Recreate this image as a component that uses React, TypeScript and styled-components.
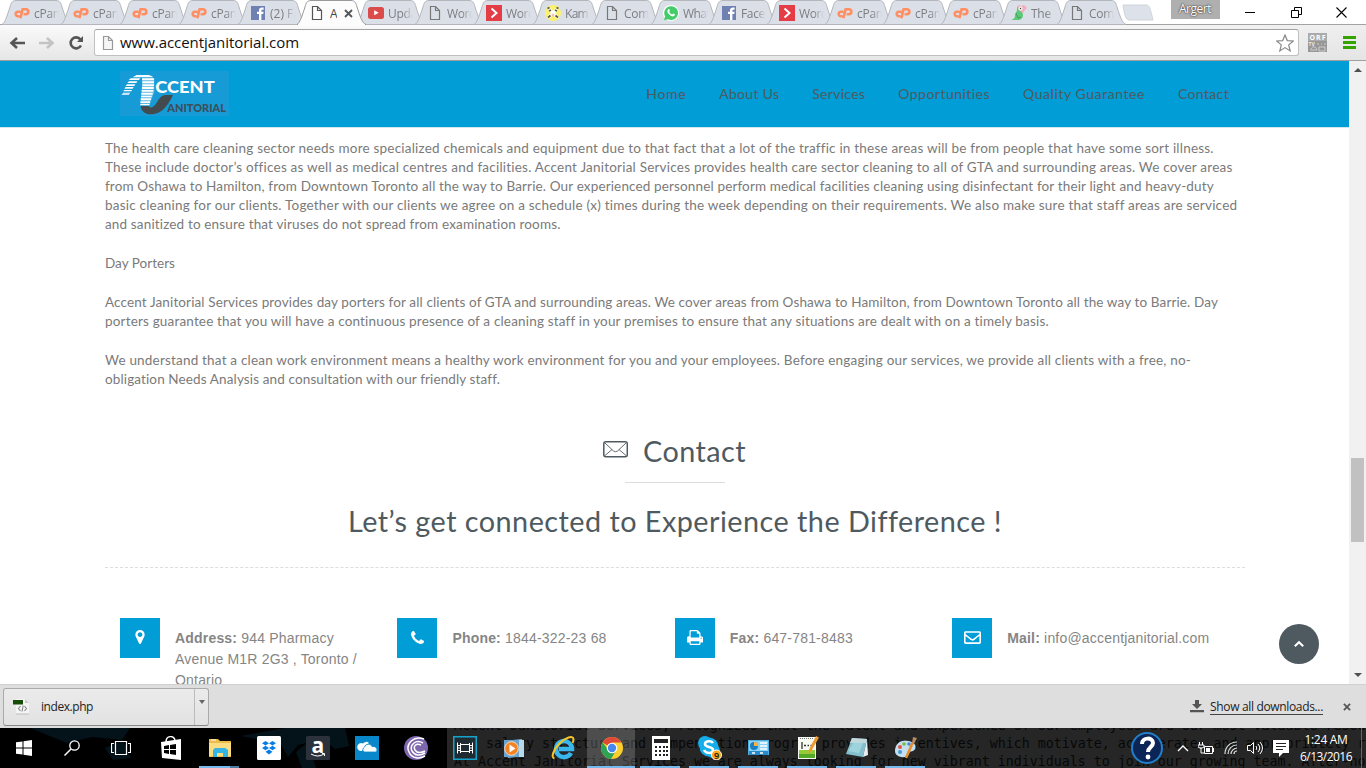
import React, { useLayoutEffect, useRef, useState } from 'react';
import styled, { createGlobalStyle, css } from 'styled-components';
import { FaRegEnvelope } from 'react-icons/fa';

const blue = '#009dd6';
const slate = '#4f5a60';
const uiFont = `"Open Sans", "Noto Sans", sans-serif`;
const siteFont = `Lato, "Open Sans", sans-serif`;

const GlobalStyle = createGlobalStyle`
  * { box-sizing: border-box; }
  body { margin: 0; background: #fff; overflow: hidden; }
  svg { display: block; flex: none; }
`;

/* Text line whose tracking adapts so that it fills the given measure. */
const Line = styled.span`
  display: block;
  width: max-content;
  white-space: pre;
`;

function Fit({ w, children }: { w: number; children: string }) {
  const ref = useRef<HTMLSpanElement>(null);
  const [spacing, setSpacing] = useState(0);
  useLayoutEffect(() => {
    if (ref.current) {
      const natural = ref.current.getBoundingClientRect().width;
      setSpacing((w - natural) / children.length);
    }
  }, [w, children]);
  return <Line ref={ref} style={{ letterSpacing: spacing }}>{children}</Line>;
}

const Screen = styled.div`
  width: 1366px;
  height: 768px;
  display: flex;
  flex-direction: column;
  overflow: hidden;
  background: #fff;
  font-family: ${uiFont};
`;

/* ---------- Browser chrome ---------- */
const TabStrip = styled.div`
  height: 24px;
  display: flex;
  flex: none;
  padding-left: 2px;
  background: #fff;
`;
const Tab = styled.div<{ $active?: boolean; $narrow?: boolean }>`
  position: relative;
  width: ${p => (p.$narrow ? 58 : 59)}px;
  height: 25px;
  flex: none;
  display: flex;
  align-items: flex-start;
  padding: 5px 0 0 12px;
  z-index: ${p => (p.$active ? 2 : 'auto')};
`;
const TabShape = styled.svg`
  position: absolute;
  left: 0;
  top: 0;
  overflow: visible;
`;
const Favicon = styled.div`
  position: relative;
  width: 16px;
  height: 16px;
`;
const TabLabel = styled.div<{ $short?: boolean }>`
  position: relative;
  width: ${p => (p.$short ? 7 : 25)}px;
  margin-left: ${p => (p.$short ? 5 : 4)}px;
  overflow: hidden;
  font-size: 12px;
  line-height: 17px;
  color: ${p => (p.$short ? '#444' : '#7b7d80')};
  ${p => !p.$short && css`mask-image: linear-gradient(90deg, #000 60%, transparent);`}
`;
const TabClose = styled.div`
  position: relative;
  margin: 4px 0 0 7px;
`;
const NewTab = styled.svg`
  margin: 4px 0 0 6px;
`;
const User = styled.div`
  width: 49px;
  height: 19px;
  margin-left: 16px;
  padding-left: 8px;
  background: #afafaf;
  color: #fff;
  font-size: 12px;
  line-height: 17px;
  text-shadow: 0 0 2px #333, 0 0 1px #333;
`;
const WindowButtons = styled.div`
  display: flex;
  gap: 34.5px;
  margin: 7px 0 0 25px;
`;

const Toolbar = styled.div`
  height: 37px;
  flex: none;
  display: flex;
  align-items: center;
  border-top: 1px solid #a3a3a3;
  border-bottom: 1px solid #a0a0a0;
  background: linear-gradient(90deg, transparent 70%, #e4e4e488), linear-gradient(#fafafa, #e6e6e6);
  padding-left: 9px;
`;
const Address = styled.div`
  width: 1205px;
  height: 27px;
  margin-left: 10px;
  padding: 0 4px 0 5px;
  display: flex;
  align-items: center;
  border: 1px solid #c0c0c0;
  border-top-color: #a2a2a2;
  border-radius: 3px;
  background: #fff;
  font-size: 15px;
  color: #111;
`;
const Url = styled.div`
  flex: 1;
  margin: -2px 0 0 4px;
  line-height: 22px;
`;

/* ---------- Web page ---------- */
const Viewport = styled.div`
  position: relative;
  height: 623px;
  flex: none;
  display: flex;
  overflow: hidden;
`;
const Site = styled.div`
  width: 1349px;
  height: 623px;
  overflow: hidden;
  font-family: ${siteFont};
`;
const Header = styled.header`
  height: 67px;
  display: flex;
  align-items: flex-start;
  justify-content: space-between;
  padding: 10px 120px 0 120px;
  background: ${blue};
  border-bottom: 1px solid #cfe6ef;
`;
const Nav = styled.nav`
  display: flex;
  gap: 33px;
  padding-top: 13px;
  font-size: 14px;
  line-height: 20px;
  color: ${slate};
`;
const Content = styled.main`
  width: 1140px;
  margin-left: 105px;
  padding-top: 11px;
`;
const Paragraph = styled.div`
  margin-bottom: 20px;
  font-size: 13.5px;
  line-height: 19px;
  color: #7a7a7a;
`;
const SectionTitle = styled.div`
  display: flex;
  align-items: center;
  margin: 41px 0 0 498px;
  gap: 15px;
  height: 42px;
  font-size: 28.8px;
  line-height: 42px;
  color: ${slate};
`;
const Rule = styled.div`
  width: 100px;
  height: 1px;
  margin: 10px 0 0 520px;
  background: #ddd;
`;
const Tagline = styled.div`
  margin: 17px 0 0 243px;
  font-size: 28.8px;
  line-height: 42px;
  color: ${slate};
`;
const Divider = styled.div`
  margin-top: 25px;
  border-top: 1px dashed #ddd;
`;
const Contacts = styled.div`
  display: grid;
  grid-template-columns: repeat(4, 277.4px);
  padding-top: 50px;
`;
const ContactItem = styled.div`
  display: flex;
  gap: 15px;
  padding: 0 15px;
`;
const IconTile = styled.div`
  width: 40px;
  height: 40px;
  flex: none;
  display: grid;
  place-items: center;
  padding-bottom: 2px;
  background: ${blue};
  color: #fff;
`;
const ContactText = styled.p<{ $nowrap?: boolean }>`
  margin: 0;
  padding-top: 10px;
  font: 14px/21px "Liberation Sans", sans-serif;
  letter-spacing: 0.19px;
  color: #858585;
  white-space: ${p => (p.$nowrap ? 'nowrap' : 'normal')};
`;
const ToTop = styled.div`
  position: absolute;
  left: 1279px;
  top: 563px;
  width: 40px;
  height: 40px;
  border-radius: 50%;
  background: ${slate};
  display: grid;
  place-items: center;
`;
const ScrollTrack = styled.div`
  width: 17px;
  display: flex;
  flex-direction: column;
  align-items: center;
  padding: 7px 0;
  background: #f1f1f1;
`;
const ScrollThumb = styled.div`
  width: 13px;
  height: 84px;
  margin: 386px 0 auto;
  background: #c1c1c1;
`;

/* ---------- Download shelf ---------- */
const Shelf = styled.div`
  height: 44px;
  flex: none;
  display: flex;
  align-items: center;
  padding-left: 3px;
  border-top: 1px solid #d0d0d0;
  background: #dedede;
  font-size: 12px;
  color: #222;
`;
const Download = styled.div`
  width: 206px;
  height: 38px;
  display: flex;
  align-items: center;
  border: 1px solid #aaa;
  border-bottom-color: #888;
  border-radius: 3px;
  background: linear-gradient(#ebebeb, #e2e2e2);
  padding-left: 9px;
`;
const FileName = styled.div`
  flex: 1;
  margin-left: 12px;
`;
const Arrow = styled.div`
  width: 14px;
  height: 36px;
  padding: 11px 0 0 4px;
  border-left: 1px solid #bbb;
`;
const ShowAll = styled.div`
  display: flex;
  align-items: center;
  gap: 6px;
  margin-left: 981px;
`;
const Underlined = styled.div`
  margin-top: 1px;
  border-bottom: 1px solid #444;
  line-height: 14px;
`;
const ShelfClose = styled.div`
  margin-left: 20px;
`;

/* ---------- Taskbar ---------- */
const Taskbar = styled.div`
  position: relative;
  height: 40px;
  flex: none;
  display: flex;
  overflow: hidden;
  background: linear-gradient(90deg, #000 0 447px, #262626 447px);
`;
const Ghost = styled.div`
  position: absolute;
  left: 454px;
  top: -11px;
  font: 13.29px/18px "DejaVu Sans Mono", monospace;
  color: #080808;
  white-space: pre;
`;
const Shade = styled.svg`
  position: absolute;
  left: 0;
  top: 0;
`;
const Slot = styled.div<{ $w?: number; $state?: 'open' | 'active' | 'group' }>`
  position: relative;
  width: ${p => p.$w ?? 49}px;
  height: 40px;
  flex: none;
  display: grid;
  place-items: center;
  ${p => p.$state === 'active' && css`
    background: linear-gradient(#ffffff2e, #ffffff2e) 0 0 / 48px 40px no-repeat;
  `}
  ${p => p.$state && css`
    &::after {
      content: '';
      position: absolute;
      bottom: 0;
      left: ${p.$state === 'active' ? 0 : 4}px;
      width: ${p.$state === 'active' ? 48 : 40}px;
      height: 2px;
      background: ${p.$state === 'group' ? 'linear-gradient(90deg, #76b9ed 31px, #4f7ba0 31px)' : '#76b9ed'};
    }
  `}
`;
const Tray = styled.div`
  position: relative;
  display: flex;
  align-items: center;
  margin-left: 201px;
`;
const TrayIcons = styled.div`
  display: flex;
  align-items: center;
  gap: 9px;
  margin-left: 14px;
`;
const Clock = styled.div`
  width: 54px;
  margin-left: 10px;
  display: flex;
  flex-direction: column;
  align-items: center;
  font-size: 12px;
  line-height: 17px;
  color: #fff;
`;
const PeekLine = styled.div`
  width: 1px;
  height: 40px;
  margin-left: 8px;
  background: #666;
`;

/* ---------- Drawings ---------- */
const PageIcon = ({ c = '#777', f = '#fff' }: { c?: string; f?: string }) => (
  <svg width="16" height="16" viewBox="0 0 16 16">
    <path d="M3.500 1.500h5l4 4v9h-9zM8.500 1.500v4h4" fill={f} stroke={c} strokeWidth="1.200" />
  </svg>
);
const CpIcon = () => (
  <svg width="16" height="16" viewBox="0 0 16 16" fill="none" stroke="#ff8f62" strokeWidth="2.600">
    <path d="M6.600 6.800H3.900a2.200 2.200 0 0 0 0 4.400h1.500M6.400 13.200L8.600 4.300h3.300a2.400 2.400 0 0 1 0 4.900H9.500" />
  </svg>
);
const FbIcon = () => (
  <svg width="16" height="16" viewBox="0 0 16 16">
    <rect x="1" y="1" width="14" height="14" fill="#6f80b3" />
    <path d="M9 15V9H7V6.800h2V5.500C9 3.400 10.200 2.600 12 2.600h1.600v2.200h-1.200c-.8 0-1 .4-1 1v1h2.200L13.200 9h-1.800v6z" fill="#fff" />
  </svg>
);
const YtIcon = () => (
  <svg width="16" height="16" viewBox="0 0 16 16">
    <rect x="0" y="2" width="16" height="12" rx="2.500" fill="#dc4b4b" />
    <path d="M6.200 5.300v5l4.500-2.500z" fill="#fff" />
  </svg>
);
const RedIcon = () => (
  <svg width="16" height="16" viewBox="0 0 16 16">
    <path d="M0 0h16v16H0z" fill="#e43d45" />
    <path d="M5.500 3.500l5 4.500-5 4.500" fill="none" stroke="#fff" strokeWidth="2" />
  </svg>
);
const KamIcon = () => (
  <svg width="16" height="16" viewBox="0 0 16 16">
    <circle cx="8" cy="8" r="8" fill="#fbf16c" />
    <path d="M3 13l9-9M13 13L4 4" stroke="#fff" strokeWidth="3" />
    <path d="M2.500 3.500l2-1M4 6l2-1M11.500 2.500l2 1M10 5l2 1M3 12.500l2.500-2M10.500 10.500l2.500 2" stroke="#5a5a48" strokeWidth="1.800" />
    <circle cx="8" cy="10" r="1.500" fill="#f4c6ae" />
  </svg>
);
const WaIcon = () => (
  <svg width="16" height="16" viewBox="0 0 16 16">
    <circle cx="8" cy="8" r="8" fill="#fff" />
    <path d="M1 15.200l1.100-3.800A6.900 6.900 0 1 1 5 14.200z" fill="#43cc69" />
    <path d="M5.200 4.200c.8-.6 1.200 0 1.700 1.300 0 .5-.8.900-.6 1.400.6 1.200 1.500 2 2.700 2.500.5.200.9-.9 1.400-.8 1.700.7 1.900 1 1.200 2-1.200 1.400-3.200.8-5-.8-2-1.800-3-4-1.400-5.600z" fill="#fff" />
  </svg>
);
const ParrotIcon = () => (
  <svg width="16" height="16" viewBox="0 0 16 16">
    <path d="M6 2c2-2 6-1 6 2l-1 3c2 3 1 7-3 8H0c3-1 4-2 4-5 0-2 2-3 2-5z" fill="#5cc878" />
    <path d="M6 2l2-2 2 1 3-1 3 3-3 3-1 2-3-2-1-3z" fill="#f6a9c0" />
    <circle cx="9.500" cy="3.500" r="2.300" fill="#e8e8dc" />
    <path d="M9 3h1v1H9z" fill="#333" />
    <path d="M5 8l2 5 3-1" stroke="#3aa85a" fill="none" />
  </svg>
);
const CloseX = ({ size = 9, w = 1.8 }: { size?: number; w?: number }) => (
  <svg width={size} height={size} viewBox="0 0 9 9">
    <path d="M1 1l7 7M8 1L1 8" stroke="#555" strokeWidth={w} />
  </svg>
);

const tabs: { icon: React.ReactNode; label: string; w: number; active?: boolean }[] = [
  { icon: <CpIcon />, label: 'cPanel', w: 35 },
  { icon: <CpIcon />, label: 'cPanel', w: 35 },
  { icon: <CpIcon />, label: 'cPanel', w: 35 },
  { icon: <CpIcon />, label: 'cPanel', w: 35 },
  { icon: <FbIcon />, label: '(2) Fa', w: 30 },
  { icon: <PageIcon c="#555" />, label: 'A', w: 7, active: true },
  { icon: <YtIcon />, label: 'Upda', w: 29 },
  { icon: <PageIcon f="none" />, label: 'Word', w: 29 },
  { icon: <RedIcon />, label: 'Word', w: 29 },
  { icon: <KamIcon />, label: 'Kam', w: 23 },
  { icon: <PageIcon f="none" />, label: 'Com', w: 25 },
  { icon: <WaIcon />, label: 'What', w: 27 },
  { icon: <FbIcon />, label: 'Face', w: 24 },
  { icon: <RedIcon />, label: 'Word', w: 29 },
  { icon: <CpIcon />, label: 'cPanel', w: 35 },
  { icon: <CpIcon />, label: 'cPanel', w: 35 },
  { icon: <CpIcon />, label: 'cPanel', w: 35 },
  { icon: <ParrotIcon />, label: 'The', w: 20 },
  { icon: <PageIcon f="none" />, label: 'Com', w: 25 },
];

const Logo = () => (
  <svg width="109" height="45" viewBox="60 33 327 135">
    <path d="M60 33h327v135H60z" fill="#179bd7" />
    <g fill="#fff">
      <path d="M110 45h36q10 2 14 7h-62zM92 55h29l-4 5H86zM126 55h36v6h-36zM87 64h25l-3 5H82zM127 64h35v6h-35zM81 73h25l-3 5H77zM127 73h35v6h-35zM77 81h24l-3 5H73zM126 81h35v6h-35zM73 90h23l-2 4H70zM125 90h35v5h-35zM69 98h22l-2 3H67zM124 98h34v6h-34zM66 103h21v2H65zM123 107h32v5h-32zM122 115h31v6h-31zM121 124h29v5h-29zM121 132h27v4h-27z" />
      <path d="M127 55h36v42l-8 20-6 19h-27z" opacity=".3" />
      <text x="166" y="98" fontFamily="Lato, sans-serif" fontWeight="900" fontSize="49" textLength="178" lengthAdjust="spacingAndGlyphs">CCENT</text>
    </g>
    <path d="M122 138h25c4 8 12 5 20-5 9-12 13-28 30-28h22c-12 25-30 58-67 58-17 0-29-10-30-25z" fill="#444b4e" />
    <text x="202" y="156" fontFamily="Lato, sans-serif" fontWeight="900" fontSize="31" fill="#3c4f5a" textLength="176" lengthAdjust="spacingAndGlyphs">ANITORIAL</text>
  </svg>
);

const svg = (children: React.ReactNode, w = 24, h = 24) => (
  <svg width={w} height={h} viewBox={`0 0 ${w} ${h}`}>{children}</svg>
);

const apps: { icon: React.ReactNode; state?: 'open' | 'active' | 'group' }[] = [
  { icon: svg(<>
    <path d="M2 6l20-3v21L3 22z" fill="#fff" /><path d="M7 6c0-7 9-7 9-1" fill="none" stroke="#fff" strokeWidth="1.500" />
    <path d="M5 10l5-1v4H5zM11 9l6-1v5h-6zM5 14h5v4l-5-1zM11 14h6v5l-6-1z" fill="#000" /></>) },
  { state: 'group', icon: svg(<>
    <path d="M1 3h9l2 2h11v16H1z" fill="#eebc4b" /><path d="M1 7h22v13H1z" fill="#fbdd81" /><path d="M3 4h5" stroke="#fff" />
    <path d="M5 21v-7l2-2h10l3 2v7h-5v-4h-6v4z" fill="#35b4e6" /></>) },
  { icon: svg(<>
    <rect width="24" height="24" rx="1.500" fill="#fff" />
    <path d="M8.500 5L12 7.300 8.500 9.600 5 7.300zM15.500 5L19 7.300l-3.500 2.300L12 7.300zM8.500 9.800L12 12l-3.500 2.300L5 12zM15.500 9.800L19 12l-3.500 2.300L12 12zM12 13.400l3.500 2.300L12 18.500l-3.500-2.800z" fill="#087ee5" /></>) },
  { icon: svg(<>
    <rect width="24" height="24" rx="1.500" fill="#2c323c" />
    <text x="5.500" y="17" fontFamily="Open Sans" fontWeight="700" fontSize="21" fill="#fff">a</text>
    <path d="M5 18q7 4 13 0M16 17.500h2.500V20" stroke="#fff" fill="none" /></>) },
  { icon: svg(<>
    <path d="M0 0h24v24H0z" fill="#0888ca" />
    <path d="M7 15a4 4 0 1 1 1-7.500 4 4 0 0 1 6-.5l-5 5z" fill="#fff" />
    <path d="M9 16a3 3 0 0 1 .5-5 4 4 0 0 1 7.500-.5c3-.5 5 1 5 3.500 0 1.500-1 2-2 2z" fill="#fff" stroke="#0888ca" strokeWidth=".8" /></>) },
  { icon: svg(<>
    <circle cx="12" cy="12" r="12" fill="#7d67ad" />
    <path d="M20 3C10-1 1 8 5 16c3 7 11 7 16 4M19 7C12 3 5 9 8 15c3 5 8 5 13 2M17 9c-5-2-8 1-6 5 2 3 6 3 10 1" fill="none" stroke="#fff" strokeWidth="1.500" /></>) },
  { icon: svg(<>
    <path d="M.75.75h22.500v22.500H.75z" fill="#202b31" stroke="#15a4cc" strokeWidth="1.500" />
    <path d="M4.500 6.500v11M19.500 6.500v11M7.500 7v10M16.500 7v10M7 8.500h10M7 15.500h10M4 9.500h3M4 12h3M4 14.500h3M17 9.500h3M17 12h3M17 14.500h3" stroke="#fff" fill="none" strokeWidth="1" /></>) },
  { icon: svg(<>
    <path d="M2 5l18-2 2 17-16 2z" fill="#78b2d7" /><path d="M16 4h6v17h-6z" fill="#b8d9ea" /><path d="M2 4h15v17H2z" fill="#6ba4cf" />
    <circle cx="9.500" cy="12.500" r="6.800" fill="#f58322" stroke="#f7ddc6" /><path d="M7.500 8.500v8l6-4z" fill="#fff" /></>) },
  { icon: svg(<>
    <path d="M20 17a8 8 0 1 1 1-4H8" fill="none" stroke="#39b7ed" strokeWidth="4.500" />
    <path d="M3.500 22.500c-4-1-1-9 5-15S22-1 22.500 3c0 1 0 2-1 4" fill="none" stroke="#f6c52a" strokeWidth="2" /></>) },
  { state: 'active', icon: svg(<>
    <circle cx="12" cy="12" r="11" fill="#f9ce2d" />
    <path d="M12 12L2.500 6.500A11 11 0 0 1 21.500 6.500H12z" fill="#df4939" />
    <path d="M2.500 6.500A11 11 0 0 0 11 23l5-8.500H9L7 12z" fill="#2fa354" />
    <circle cx="12" cy="12" r="5.300" fill="#fff" /><circle cx="12" cy="12" r="4.200" fill="#4688ed" /></>) },
  { state: 'open', icon: svg(<>
    <path d="M3 0h18v24H3z" fill="#fff" /><path d="M5 3h14v4H5z" fill="#222" />
    {[10, 14, 18].map(y => <path key={y} d={`M6 ${y}h2v2h-2zM10 ${y}h2v2h-2zM14 ${y}h2v2h-2zM17 ${y}h2v2h-2z`} fill="#222" />)}</>) },
  { state: 'open', icon: svg(<>
    <circle cx="7" cy="7" r="7" fill="#16aeea" /><circle cx="15" cy="15" r="7" fill="#16aeea" /><circle cx="11" cy="11" r="9.500" fill="#16aeea" />
    <path d="M15 7c-2-3-8-2-8 1 0 4 8 2 8 6 0 4-7 4-9 0" stroke="#fff" strokeWidth="2.500" fill="none" />
    <circle cx="18.500" cy="19" r="5" fill="#f8a51b" stroke="#fff" />
    <text x="16" y="22.500" fontSize="9" fontFamily="Open Sans" fontWeight="600" fill="#111">9</text></>) },
  { state: 'open', icon: svg(<>
    <path d="M1 4h21v15H1z" fill="#4bafe4" /><path d="M2 5h19v13H2z" fill="#89d2f4" />
    <path d="M2 15h19v4H2z" fill="#2a8bc8" /><circle cx="7" cy="10" r="4" fill="#1b7fc6" /><path d="M7 10V6a4 4 0 0 1 4 4z" fill="#ffb33b" />
    <path d="M13 7h7M13 10h7M13 13h7M5 17h3M13 17h3" stroke="#fff" strokeWidth="1.300" /></>) },
  { state: 'open', icon: svg(<>
    <path d="M2 1h18v22H2z" fill="#f7faf0" /><path d="M3 14h16v8H3z" fill="#91cc3b" /><path d="M3 18h16v4H3z" fill="#53a827" />
    <path d="M4 2.500h13" stroke="#777" strokeDasharray="1 1" /><path d="M6 6v7M8 9.500h2M11.500 9.500h1.500M14.500 9.500h1.500" stroke="#333" strokeWidth="1.300" />
    <path d="M20 0l3 1.500-8 14-3 2 1-4z" fill="#ee9b2f" /></>) },
  { state: 'open', icon: svg(<>
    <path d="M7 2l15 1-4 18-17-3z" fill="#83bfcc" /><path d="M7 2l15 1-1 4L5 7z" fill="#c3d8db" /><path d="M18 21l4-18 1 16z" fill="#e9eff0" />
    <path d="M3 15l6-9 9 1-4 10z" fill="#a9dce5" opacity=".7" /></>) },
  { state: 'open', icon: svg(<>
    <path d="M1 15C1 7 8 3 15 5c8 2 8 8 4 10-3 1-3 0-4 3-2 5-14 4-14-3z" fill="#c3dff0" />
    <circle cx="6" cy="11" r="2" fill="#e05843" /><circle cx="10" cy="8" r="1.800" fill="#77bb45" /><circle cx="15" cy="8" r="1.800" fill="#448ad5" /><circle cx="6" cy="16" r="2" fill="#479ad1" />
    <path d="M12 22l7-16" stroke="#e88b2b" strokeWidth="2.500" /><path d="M18 7l1-6 4 1-3 6z" fill="#b48a62" /></>) },
];

export default function App() {
  return (
    <Screen>
      <GlobalStyle />
      <TabStrip>
        {tabs.map((t, i) => (
          <Tab key={i} $active={t.active} $narrow={i > 10}>
            <TabShape width="70" height="25">
              <path
                d="M0 24.500C3 23 5 16 8 7 9 3 10 .5 14 .5H54C58 .5 59 3 60 7 63 16 65 23 69 24.500z"
                fill={t.active ? '#fcfcfc' : '#dbe0e8'}
                stroke={t.active ? '#999' : '#b3b6bb'}
              />
              {t.active && <path d="M1 25h67" stroke="#fcfcfc" strokeWidth="2" />}
            </TabShape>
            <Favicon>{t.icon}</Favicon>
            <TabLabel $short={t.active}><Fit w={t.w}>{t.label}</Fit></TabLabel>
            {t.active && <TabClose><CloseX /></TabClose>}
          </Tab>
        ))}
        <NewTab width="34" height="18">
          <path d="M3 1h23c3 0 4 2 7 15H10C6 16 5 14 3 1z" transform="translate(-1)" fill="#dde2ea" stroke="#ced3da" />
        </NewTab>
        <User><Fit w={32}>Argert</Fit></User>
        <WindowButtons>
          <svg width="11" height="11"><path d="M0 5.500h10" stroke="#000" /></svg>
          <svg width="11" height="11" fill="none" stroke="#000"><path d="M.5 3.500h7v7h-7zM3.500 3V.5h7v7H8" /></svg>
          <svg width="11" height="11"><path d="M.5.5l10 10M10.500.5l-10 10" stroke="#000" strokeWidth="1.100" /></svg>
        </WindowButtons>
      </TabStrip>

      <Toolbar>
        <svg width="75" height="18" viewBox="0 0 75 18" fill="none" strokeWidth="2.600">
          <path d="M2 9h14M8 4L2.500 9l5.500 5" stroke="#555" />
          <path d="M30 9h14M38 4l5.500 5-5.500 5" stroke="#c3c3c3" />
          <path d="M71.500 5.500A5.500 5.500 0 1 0 72 11.500" stroke="#555" />
          <path d="M74 2v6h-6z" fill="#555" />
        </svg>
        <Address>
          <PageIcon c="#999" f="#f6f6f6" />
          <Url><Fit w={179}>www.accentjanitorial.com</Fit></Url>
          <svg width="18" height="18" viewBox="0 0 18 18">
            <path d="M9 1l2.300 5.600 6 .4-4.600 3.900 1.500 6L9 13.600 3.800 16.900l1.500-6L.7 7l6-.4z" fill="#fff" stroke="#888" strokeWidth="1.200" />
          </svg>
        </Address>
        <svg width="60" height="20" viewBox="0 0 60 20">
          <path d="M9 0h19v19H9z" fill="#ababab" /><path d="M9 8h19v11H9z" fill="#979797" />
          <text x="10.500" y="6.500" fontFamily="Open Sans" fontWeight="700" fontSize="7" textLength="16" fill="#fff">ORF</text>
          <text x="9.500" y="13" fontFamily="Open Sans" fontWeight="700" fontSize="5" fill="#eee">TV</text>
          <path d="M18 11h2M22 11h1M25 11h2M11 17h7c-1-4-5-4-6-1M20 14h6v4h-6z" stroke="#ddd" fill="none" strokeWidth=".8" />
          <path d="M44 4.500h13M44 9.500h13M44 14.500h13" stroke="#35a300" strokeWidth="3" />
        </svg>
      </Toolbar>

      <Viewport>
        <Site>
          <Header>
            <Logo />
            <Nav>
              <Fit w={40}>Home</Fit>
              <Fit w={60}>About Us</Fit>
              <Fit w={53}>Services</Fit>
              <Fit w={92}>Opportunities</Fit>
              <Fit w={122}>Quality Guarantee</Fit>
              <Fit w={51}>Contact</Fit>
            </Nav>
          </Header>
          <Content>
            <Paragraph>
              <Fit w={1108}>The health care cleaning sector needs more specialized chemicals and equipment due to that fact that a lot of the traffic in these areas will be from people that have some sort illness.</Fit>
              <Fit w={1127}>These include doctor’s offices as well as medical centres and facilities. Accent Janitorial Services provides health care sector cleaning to all of GTA and surrounding areas. We cover areas</Fit>
              <Fit w={1109}>from Oshawa to Hamilton, from Downtown Toronto all the way to Barrie. Our experienced personnel perform medical facilities cleaning using disinfectant for their light and heavy-duty</Fit>
              <Fit w={1132}>basic cleaning for our clients. Together with our clients we agree on a schedule (x) times during the week depending on their requirements. We also make sure that staff areas are serviced</Fit>
              <Fit w={456}>and sanitized to ensure that viruses do not spread from examination rooms.</Fit>
            </Paragraph>
            <Paragraph><Fit w={70}>Day Porters</Fit></Paragraph>
            <Paragraph>
              <Fit w={1113}>Accent Janitorial Services provides day porters for all clients of GTA and surrounding areas. We cover areas from Oshawa to Hamilton, from Downtown Toronto all the way to Barrie. Day</Fit>
              <Fit w={944}>porters guarantee that you will have a continuous presence of a cleaning staff in your premises to ensure that any situations are dealt with on a timely basis.</Fit>
            </Paragraph>
            <Paragraph>
              <Fit w={1086}>We understand that a clean work environment means a healthy work environment for you and your employees. Before engaging our services, we provide all clients with a free, no-</Fit>
              <Fit w={395}>obligation Needs Analysis and consultation with our friendly staff.</Fit>
            </Paragraph>
            <SectionTitle>
              <svg width="25" height="23" viewBox="0 0 25 23" fill="none" stroke={slate}>
                <rect x=".8" y="1.800" width="23.500" height="15" rx="2" strokeWidth="1.500" />
                <path d="M2 3l8.500 8q2 1.500 4 0L23 3M2 15.500l7-6M23 15.500l-7-6" strokeWidth=".9" />
              </svg>
              <Fit w={103}>Contact</Fit>
            </SectionTitle>
            <Rule />
            <Tagline><Fit w={653}>Let’s get connected to Experience the Difference !</Fit></Tagline>
            <Divider />
            <Contacts>
              <ContactItem>
                <IconTile><svg width="10" height="14" viewBox="0 0 1024 1536"><path fill="#fff" d="M768 512q0-106-75-181t-181-75-181 75-75 181 75 181 181 75 181-75 75-181zm256 0q0 109-33 179l-364 774q-16 33-47.500 52t-67.500 19-67.500-19-46.500-52l-365-774q-33-70-33-179 0-212 150-362t362-150 362 150 150 362z" /></svg></IconTile>
                <ContactText><b>Address:</b> 944 Pharmacy Avenue M1R 2G3 , Toronto / Ontario</ContactText>
              </ContactItem>
              <ContactItem>
                <IconTile><svg width="13" height="13" viewBox="0 0 1408 1408"><path fill="#fff" d="M1408 1112q0 27-10 70.500t-21 68.500q-21 50-122 106-94 51-186 51-27 0-53-3.500t-57.500-12.500-47-14.500-55.500-20.500-49-18q-98-35-175-83-127-79-264-216t-216-264q-48-77-83-175-3-9-18-49t-20.500-55.500-14.500-47-12.500-57.500-3.500-53q0-92 51-186 56-101 106-122 25-11 68.500-21t70.500-10q14 0 21 3 18 6 53 76 11 19 30 54t35 63.500 31 53.500q3 4 17.500 25t21.500 35.500 7 28.500q0 20-28.500 50t-62 55-62 53-28.500 46q0 9 5 22.500t8.500 20.500 14 24 11.500 19q76 137 174 235t235 174q2 1 19 11.500t24 14 20.500 8.500 22.500 5q18 0 46-28.500t53-62 55-62 50-28.500q14 0 28.500 7t35.500 21.500 25 17.500q25 15 53.500 31t63.500 35 54 30q70 35 76 53 3 7 3 21z" /></svg></IconTile>
                <ContactText $nowrap><b>Phone:</b> 1844-322-23 68</ContactText>
              </ContactItem>
              <ContactItem>
                <IconTile><svg width="16" height="15" viewBox="0 0 1664 1536"><path fill="#fff" d="M384 1408h896v-256h-896v256zm0-640h896v-384h-160q-40 0-68-28t-28-68v-160h-640v640zm1152 64q0-26-19-45t-45-19-45 19-19 45 19 45 45 19 45-19 19-45zm128 0v416q0 13-9.500 22.500t-22.500 9.500h-224v160q0 40-28 68t-68 28h-960q-40 0-68-28t-28-68v-160h-224q-13 0-22.500-9.500t-9.500-22.500v-416q0-79 56.500-135.500t135.500-56.500h64v-544q0-40 28-68t68-28h672q40 0 88 20t76 48l152 152q28 28 48 76t20 88v256h64q79 0 135.500 56.500t56.500 135.500z" /></svg></IconTile>
                <ContactText $nowrap><b>Fax:</b> 647-781-8483</ContactText>
              </ContactItem>
              <ContactItem>
                <IconTile><FaRegEnvelope size={17} /></IconTile>
                <ContactText $nowrap><b>Mail:</b> info@accentjanitorial.com</ContactText>
              </ContactItem>
            </Contacts>
          </Content>
        </Site>
        <ToTop><svg width="12" height="8" viewBox="0 0 12 8"><path d="M1.800 6.300L6 2.200l4.200 4.100" fill="none" stroke="#fff" strokeWidth="2" /></svg></ToTop>
        <ScrollTrack>
          <svg width="8" height="4"><path d="M0 4l4-4 4 4z" fill="#505050" /></svg>
          <ScrollThumb />
          <svg width="8" height="4"><path d="M0 0l4 4 4-4z" fill="#505050" /></svg>
        </ScrollTrack>
      </Viewport>

      <Shelf>
        <Download>
          <svg width="16" height="17" viewBox="0 0 16 17">
            <path d="M3 1h9l4 4v11H3z" fill="#f5f5f5" /><path d="M12 1v4h4z" fill="#ccc" /><path d="M3 16h13" stroke="#bbb" />
            <path d="M0 2h10v4.500H0z" fill="#164c05" />
            <path d="M7.500 8L5.500 10.500l2 2.500M11.500 8l2 2.500-2 2.500M10.200 7.500L9 13.500" stroke="#888" fill="none" strokeWidth="1.100" />
          </svg>
          <FileName><Fit w={52}>index.php</Fit></FileName>
          <Arrow><svg width="6" height="4"><path d="M0 0h6L3 4z" fill="#666" /></svg></Arrow>
        </Download>
        <ShowAll>
          <svg width="14" height="14" viewBox="0 0 14 14" fill="#555"><path d="M5 0h4v4h3L7 9 2 4h3zM0 10h14v2.200H0z" /></svg>
          <Underlined><Fit w={113}>Show all downloads...</Fit></Underlined>
        </ShowAll>
        <ShelfClose><CloseX size={8} w={2} /></ShelfClose>
      </Shelf>

      <Taskbar>
        <Shade width="447" height="40" fill="#04121a">
          <path d="M30 0h100l-8 12-30-3-25 6zM105 20l18-8 8 18-18 2zM240 8l45-8h60l4 18-14 3-12-10-25 6-10 12-8-14zM296 24l12-10 8 26h-14z" />
        </Shade>
        <Ghost>{'Accent Janitorial Services, recognizes that the talent and experience of our employees are our most valuable resources.\nOur salary structure and compensation program provides incentives, which motivate, accelerate, and appropriately reward\nAt Accent Janitorial Services we are always looking for new vibrant individuals to join our growing team. After-noon'}</Ghost>
        <Slot $w={48}>{svg(<path d="M0 2.300L6.500 1.400V7.500H0zM7.500 1.200L16 0v7.500H7.500zM0 8.500h6.500v6.100L0 13.700zM7.500 8.500H16V16l-8.500-1.200z" fill="#fff" />, 16, 16)}</Slot>
        <Slot $w={48}>{svg(<><circle cx="10.500" cy="5.500" r="4.700" fill="none" stroke="#fff" strokeWidth="1.300" /><path d="M7 9l-6.500 6.500" stroke="#fff" strokeWidth="1.500" /></>, 16, 16)}</Slot>
        <Slot $w={50}>{svg(<path d="M4.500.5h11v13h-11zM3 2.500H.5v9H3M17 2.500h2.500v9H17" fill="none" stroke="#fff" strokeWidth="1.200" />, 20, 14)}</Slot>
        {apps.map((a, i) => <Slot key={i} $state={a.state}>{a.icon}</Slot>)}
        <Tray>
          {svg(<>
            <circle cx="16" cy="16" r="15" fill="#0b2556" stroke="#237fc9" strokeWidth="2" />
            <path d="M11 12c0-7 11-7 11-1 0 4-5 4-5 9" fill="none" stroke="#fff" strokeWidth="4" /><circle cx="17" cy="25" r="2.400" fill="#fff" /></>, 32, 32)}
          <TrayIcons>
            {svg(<path d="M1 7l5-5 5 5" fill="none" stroke="#fff" strokeWidth="1.300" />, 12, 9)}
            {svg(<><path d="M6.500 4.500h8v7h-8z" fill="none" stroke="#fff" /><path d="M8 6h4v4H8zM15 6h1v4h-1z" fill="#fff" /><path d="M1.500 0v3M4.500 0v3M0 3h6v2q-3 3-6 0zM3 5v6h3" fill="none" stroke="#fff" /></>, 17, 13)}
            {svg(<path d="M1 13C1 6 6 1 13 1M4 13c0-5 4-9 9-9M7 13c0-3 3-6 6-6M10 13c0-2 1-3 3-3" fill="none" stroke="#ddd" strokeWidth="1.200" />, 14, 14)}
            {svg(<path d="M.5 4.500h3l3-3v11l-3-3h-3zM9 5q1.500 2 0 4M11 3q3.500 4 0 8M13 1q5 6 0 12" fill="none" stroke="#fff" />, 17, 14)}
            {svg(<><path d="M0 0h16v13h-6l-4 4v-4H0z" fill="#fff" /><path d="M3 3.500h10M3 6.500h10M3 9.500h7" stroke="#222" /></>, 16, 17)}
          </TrayIcons>
          <Clock><Fit w={43}>1:24 AM</Fit><Fit w={52}>6/13/2016</Fit></Clock>
          <PeekLine />
        </Tray>
      </Taskbar>
    </Screen>
  );
}
